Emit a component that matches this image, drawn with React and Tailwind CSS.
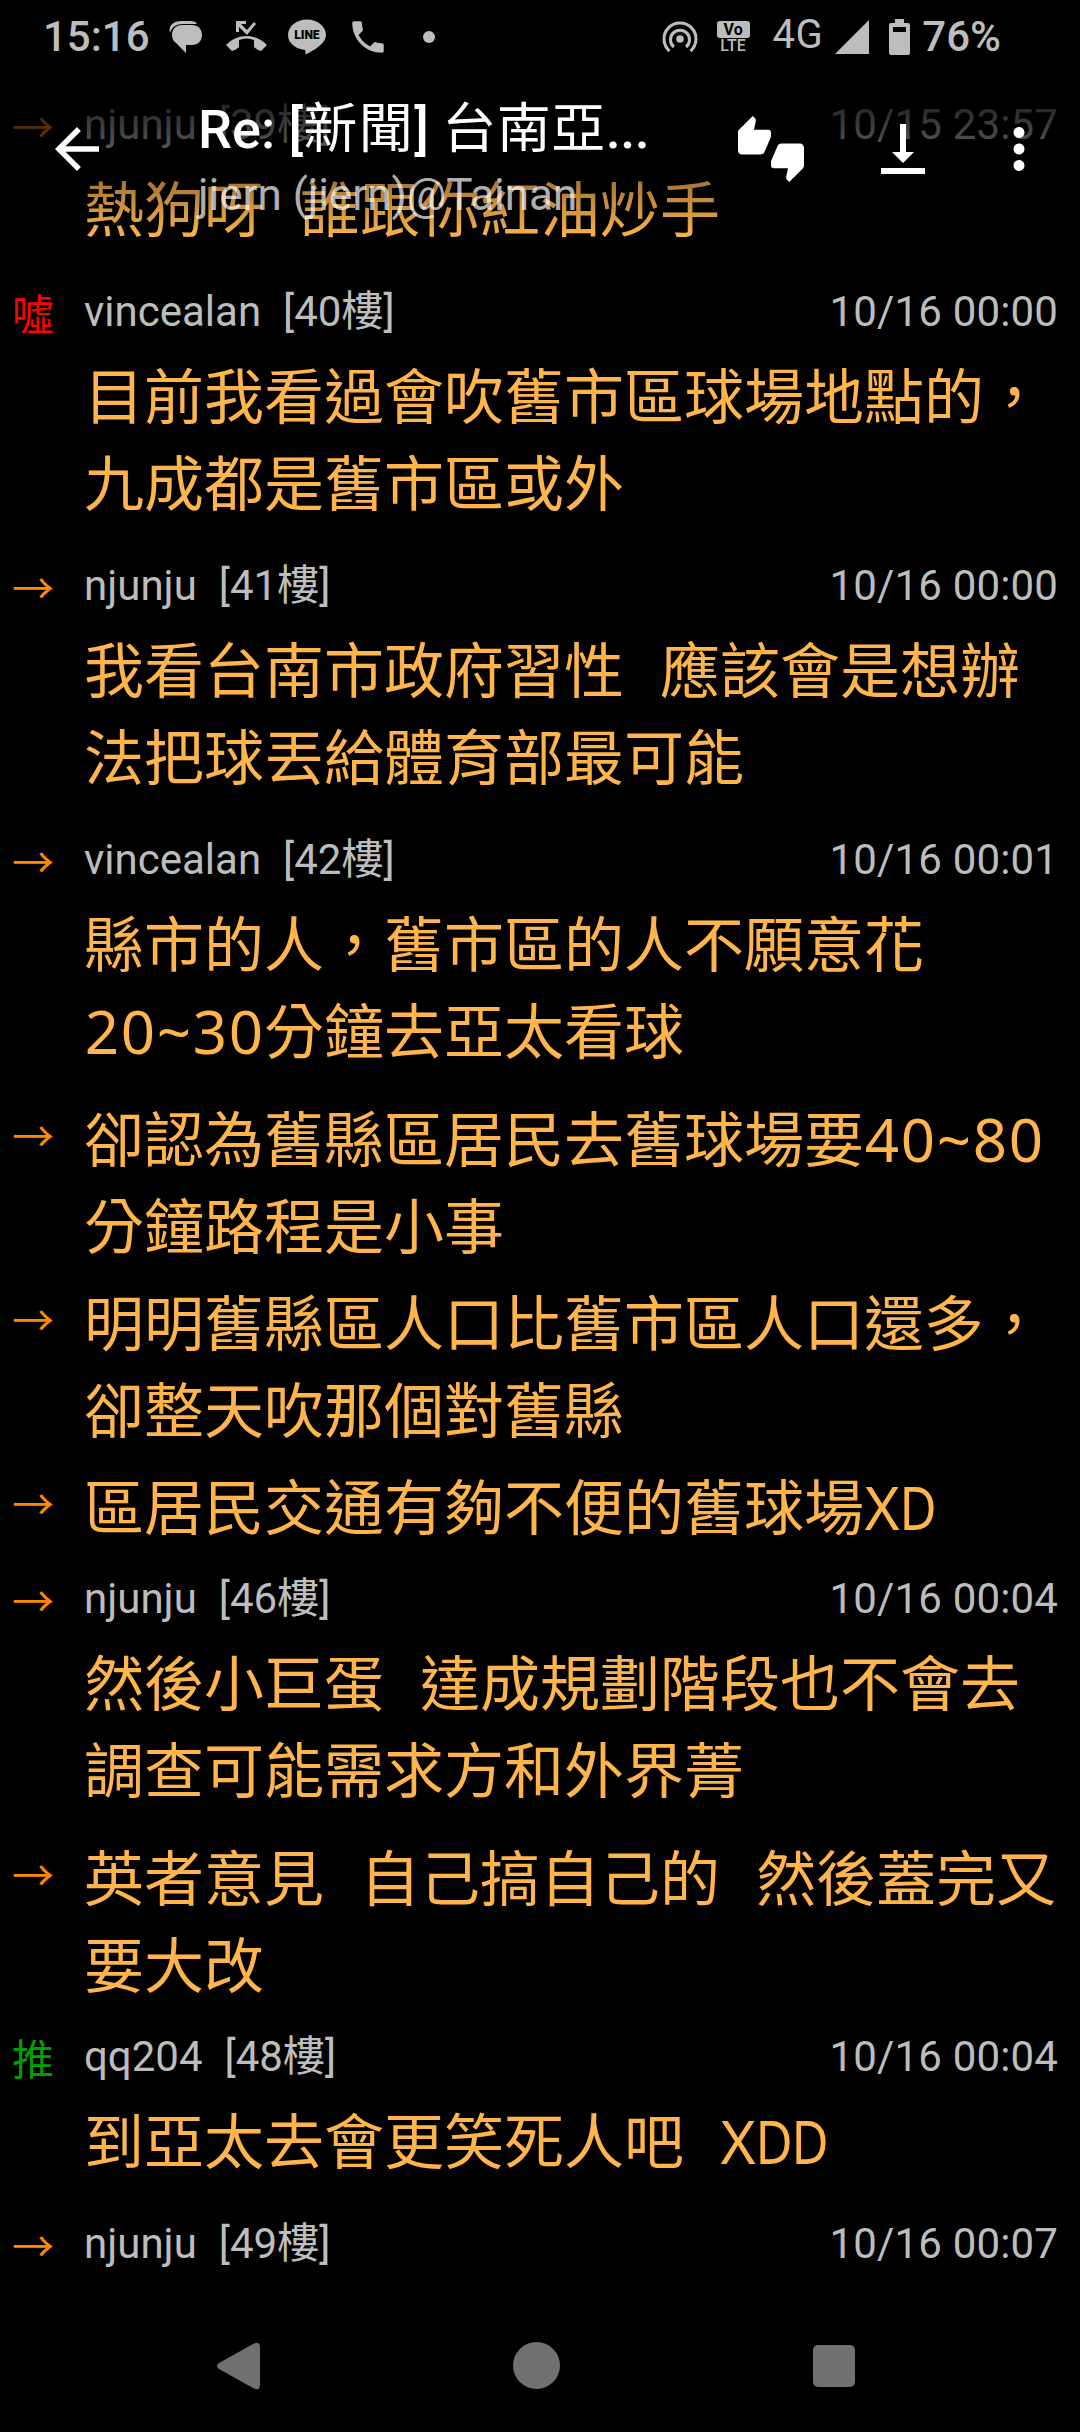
import React from "react";
import { MdArrowBack, MdPhone, MdThumbsUpDown, MdMoreVert } from "react-icons/md";

const marks = {
  arrow: { text: "→", color: "text-[#ff8800]" },
  boo: { text: "噓", color: "text-[#ff0000]" },
  push: { text: "推", color: "text-[#009e00]" },
};

const comments = [
  { mark: "arrow", user: "njunju", floor: 39, time: "10/15 23:57", lines: ["熱狗呀 誰跟你紅油炒手"] },
  { mark: "boo", user: "vincealan", floor: 40, time: "10/16 00:00", lines: ["目前我看過會吹舊市區球場地點的，", "九成都是舊市區或外"] },
  { mark: "arrow", user: "njunju", floor: 41, time: "10/16 00:00", lines: ["我看台南市政府習性 應該會是想辦", "法把球丟給體育部最可能"] },
  { mark: "arrow", user: "vincealan", floor: 42, time: "10/16 00:01", lines: ["縣市的人，舊市區的人不願意花", "20~30分鐘去亞太看球"] },
  { mark: "arrow", lines: ["卻認為舊縣區居民去舊球場要40~80", "分鐘路程是小事"] },
  { mark: "arrow", lines: ["明明舊縣區人口比舊市區人口還多，", "卻整天吹那個對舊縣"] },
  { mark: "arrow", lines: ["區居民交通有夠不便的舊球場XD"] },
  { mark: "arrow", user: "njunju", floor: 46, time: "10/16 00:04", lines: ["然後小巨蛋 達成規劃階段也不會去", "調查可能需求方和外界菁"] },
  { mark: "arrow", lines: ["英者意見 自己搞自己的 然後蓋完又", "要大改"] },
  { mark: "push", user: "qq204", floor: 48, time: "10/16 00:04", lines: ["到亞太去會更笑死人吧 XDD"] },
  { mark: "arrow", user: "njunju", floor: 49, time: "10/16 00:07", lines: [] },
];

// half-width characters sit on a fixed 36px cell, CJK keeps its 60px advance
function Line({ text }) {
  return (
    <p className="h-[87px] leading-[87px] whitespace-pre">
      {text.split(/([\x20-\x7e])/).filter(Boolean).map((part, i) => {
        if (!/^[\x20-\x7e]$/.test(part)) return <span key={i}>{part}</span>;
        return (
          <span key={i} className={`inline-block w-9 text-center ${part === "D" ? "scale-x-85" : ""}`}>
            <span className="inline-block -mx-3">{part}</span>
          </span>
        );
      })}
    </p>
  );
}

function Comment({ item }) {
  const mark = marks[item.mark];
  return (
    <article className={`flex ${item.user ? "pb-[11px]" : ""}`}>
      <div className={`w-[84px] pl-3 pt-[14px] text-[42px] leading-[56px] shrink-0 ${mark.color}`}>{mark.text}</div>
      <div className="flex-1">
        {item.user && (
          <header className="h-[79px] pt-[10px] pr-[22px] flex justify-between text-[42px] leading-[56px] text-[#bdbdbd]">
            <div className="flex gap-[22px]">
              <span>{item.user}</span>
              <span>[{item.floor}樓]</span>
            </div>
            <time className="tracking-[0.15px]">{item.time}</time>
          </header>
        )}
        <div className="font-['Noto_Sans','Noto_Sans_CJK_TC',sans-serif] text-[60px] text-[#ffb54c]">
          {item.lines.map((line) => (
            <Line key={line} text={line} />
          ))}
        </div>
      </div>
    </article>
  );
}

function StatusBar() {
  return (
    <div className="h-[72px] pt-px pl-[43px] pr-[79px] flex items-center justify-between text-[#bdbdbd] text-[42px] font-medium">
      <div className="flex items-center">
        <span className="w-[126px]">15:16</span>
        <svg className="w-[33px] h-8" viewBox="0 0 33 32" fill="currentColor">
          <path d="M1 12C-1 5 4 0 12 0h9c4 0 6 1 7 3H14C7 3 3 6 1 12z" />
          <path d="M13 4h10c6 0 10 4 10 10s-4 10-10 10h-6v8L7 22c-3-2-4-5-4-8 0-6 4-10 10-10z" />
        </svg>
        <svg className="ml-6 w-[41px] h-[31px]" viewBox="0 0 41 31" fill="currentColor">
          <path d="M10 0h10v3h-5l6 6 7-8 2 2-9 11-8-8v5h-3zM20.500 15C13 15 6 18 0 24l6 6c3-1 5-2 7-4v-7c5-2 10-2 15 0v7c2 2 4 3 7 4l6-6c-6-6-13-9-20.500-9z" />
        </svg>
        <svg className="ml-[21px] w-[38px] h-9" viewBox="0 0 39 36">
          <path fill="currentColor" d="M19.500 0C9 0 0 7 0 16c0 8 7 14 16 15 2 0 2 1 2 5 8-4 21-11 21-20C39 7 30 0 19.500 0z" />
          <text x="6.500" y="20.500" fontSize="12.500" fontWeight="900" textLength="26" className="fill-black">LINE</text>
        </svg>
        <MdPhone className="ml-[21px] size-[42px]" />
        <span className="ml-[34px] size-3 rounded-full bg-[#bdbdbd]" />
      </div>
      <div className="flex items-center">
        <svg className="w-9 h-8" viewBox="0 0 36 32" fill="none" stroke="currentColor" strokeWidth="3">
          <circle cx="18" cy="18" r="3.800" fill="currentColor" stroke="none" />
          <path d="M7.500 30a16 16 0 1 1 21 0M12 26a9.500 9.500 0 1 1 12 0" />
        </svg>
        <div className="ml-[19px] w-[33px] flex flex-col items-center text-[16px] leading-[15px]">
          <span className="w-full h-[17px] rounded-[3px] bg-[#bdbdbd] text-black text-center font-bold leading-[18px]">Vo</span>
          <span>LTE</span>
        </div>
        <span className="ml-[23px] -mt-[3px] text-[40px] font-normal tracking-[0.5px]">4G</span>
        <svg className="ml-3 w-[34px] h-[34px]" viewBox="0 0 34 34" fill="currentColor">
          <path d="M34 0v34H0z" />
        </svg>
        <svg className="ml-5 w-[21px] h-9" viewBox="0 0 21 36" fill="currentColor" fillRule="evenodd">
          <path d="M6 0h9v4h4q2 0 2 2v28q0 2-2 2H2q-2 0-2-2V6q0-2 2-2h4zM4 8v5h13V8z" />
        </svg>
        <span className="ml-3">76%</span>
      </div>
    </div>
  );
}

function AppBar() {
  return (
    <div className="h-[168px] flex items-start bg-gradient-to-b from-black to-transparent text-white">
      <MdArrowBack className="ml-[44px] mt-[44px] size-[66px] shrink-0" />
      <div className="ml-[88px] w-[472px]">
        <h1 className="mt-[23px] h-[70px] leading-[70px] text-[54px] font-medium whitespace-nowrap">
          Re: [<span className="font-normal tracking-[1.5px]">新聞</span>]{" "}
          <span className="font-normal tracking-[0.5px]">台南亞</span>
          <span className="-tracking-[0.5px]">...</span>
        </h1>
        <p className="mt-[2px] text-[44px] leading-[56px] text-white/70 whitespace-nowrap">jiern (jiern)@Tainan</p>
      </div>
      <MdThumbsUpDown className="ml-[68px] mt-[44px] size-[66px]" />
      <svg className="ml-[77px] mt-[52px] w-11 h-[50px]" viewBox="0 0 44 50" fill="currentColor">
        <path d="M19 0h6v28h8L22 39 11 28h8zM0 44h44v6H0z" />
      </svg>
      <MdMoreVert className="ml-[61px] mt-[44px] size-[66px]" />
    </div>
  );
}

function NavBar() {
  return (
    <nav className="h-[133px] bg-black pl-[217px] flex items-center text-[#707070]">
      <svg className="w-[43px] h-12" viewBox="0 0 43 48" fill="currentColor">
        <path d="M36 2q7-4 7 4v36q0 8-7 4L2 27q-4-3 0-6z" />
      </svg>
      <span className="ml-[253px] size-[47px] rounded-full bg-current" />
      <span className="ml-[253px] size-[42px] rounded-[5px] bg-current" />
    </nav>
  );
}

export default function App() {
  return (
    <div className="relative w-[1080px] h-[2432px] overflow-hidden bg-black flex flex-col font-[Roboto,'Noto_Sans_CJK_TC',sans-serif]">
      <main className="flex-1 min-h-0 overflow-hidden pt-[87px] flex flex-col gap-[10px]">
        {comments.map((item, i) => (
          <Comment key={i} item={item} />
        ))}
      </main>
      <NavBar />
      {/* translucent bars float over the scrolled thread */}
      <div className="absolute inset-x-0 top-0">
        <div className="bg-black">
          <StatusBar />
        </div>
        <AppBar />
      </div>
    </div>
  );
}
